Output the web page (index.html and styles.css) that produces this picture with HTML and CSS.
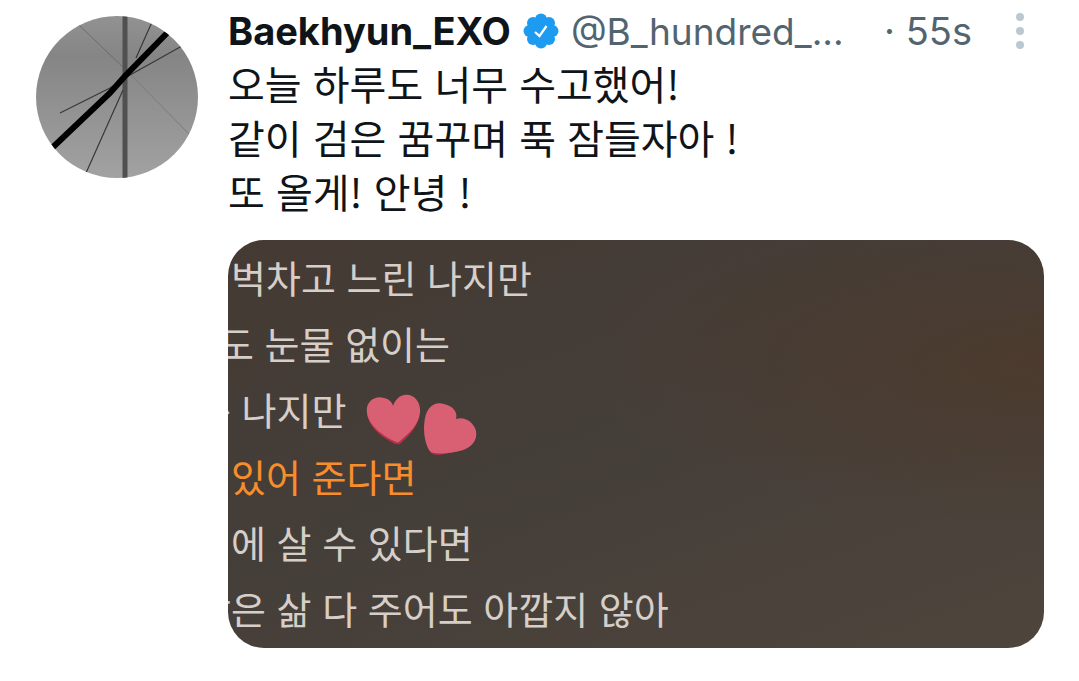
FILE: index.html
```html
<!DOCTYPE html>
<html lang="ko">
<head>
<meta charset="utf-8">
<meta name="viewport" content="width=device-width, initial-scale=1">
<title>Baekhyun_EXO</title>
<link rel="stylesheet" href="styles.css">
</head>
<body>
<article class="tweet">
  <svg class="avatar" viewBox="0 0 162 162" role="img" aria-label="Baekhyun_EXO">
    <defs>
      <linearGradient id="sky" x1="0" y1="0" x2="0" y2="1">
        <stop offset="0" stop-color="#929292"/>
        <stop offset=".25" stop-color="#858585"/>
        <stop offset=".5" stop-color="#8f8f8f"/>
        <stop offset="1" stop-color="#a2a2a2"/>
      </linearGradient>
      <clipPath id="disc"><circle cx="81" cy="81" r="81"/></clipPath>
    </defs>
    <g clip-path="url(#disc)" fill="none">
      <path fill="url(#sky)" d="M0 0h162v162H0z"/>
      <path stroke="#6c6c6c" d="M43 9l48 46"/>
      <path stroke="#7c7c7c" d="M91 55l62 63"/>
      <path stroke="#505050" stroke-width="5" d="M89 0v162"/>
      <path stroke="#383838" stroke-width="1.2" d="M24 97l50-25 20-13 52-29M50 157l37-83M100 42l16-36"/>
      <path stroke="#000" stroke-width="6" d="M15 133l59-56 15-17 45-46"/>
    </g>
  </svg>
  <div class="content">
    <header class="header">
      <a class="name" href="#">Baekhyun_EXO</a>
      <svg class="badge" viewBox="0 0 36 36" role="img" aria-label="Verified">
        <g fill="#1d9bf0">
          <circle cx="18" cy="18" r="14"/>
          <circle cx="18" cy="6.5" r="6"/><circle cx="26" cy="10" r="6"/>
          <circle cx="29.500" cy="18" r="6"/><circle cx="26" cy="26" r="6"/>
          <circle cx="18" cy="29.500" r="6"/><circle cx="10" cy="26" r="6"/>
          <circle cx="6.500" cy="18" r="6"/><circle cx="10" cy="10" r="6"/>
        </g>
        <path d="M12 19l4.500 4 7-10" fill="none" stroke="#fff" stroke-width="2.200"/>
      </svg>
      <a class="handle" href="#">@B_hundred_...</a>
      <span class="time">· 55s</span>
      <button class="more" type="button" aria-label="More">
        <svg class="dots" viewBox="0 0 8 36" fill="#b9c8d1"><circle cx="4" cy="4" r="4"/><circle cx="4" cy="18" r="4"/><circle cx="4" cy="32" r="4"/></svg>
      </button>
    </header>
    <p class="text">오늘 하루도 너무 수고했어!<br>같이 검은 꿈꾸며 푹 잠들자아 !<br>또 올게! 안녕 !</p>
    <div class="media">
      <p class="lyric">벅차고 느린 나지만</p>
      <p class="lyric cut-short">도 눈물 없이는</p>
      <p class="lyric cut-long">는 나지만
        <svg class="hearts" viewBox="0 0 112 62" aria-hidden="true">
          <path fill="#b52f46" d="M27 49C16 43 3 34 1 20L54 15C54 31 44 41 34 50Q31 51 27 49z"/>
          <path fill="#d96073" d="M30 48C17 42 3 32 1 19C-1 8 9 1 18 4C23 5 26 8 27 12C29 6 33 2 38 1C47-1 55 7 54 18C53 31 43 39 34 47Q32 49 30 48z"/>
          <path fill="#b52f46" d="M61 45L64 58Q66 61 73 61L98 56z"/>
          <path fill="#d96073" d="M63 56C58 47 57 34 59 24C61 13 69 7 78 10C87 12 92 18 90 25C98 22 108 28 110 37C112 47 104 54 97 56C87 59 77 60 68 59Q65 59 63 56z"/>
        </svg>
      </p>
      <p class="lyric current">있어 준다면</p>
      <p class="lyric">에 살 수 있다면</p>
      <p class="lyric cut-long">남은 삶 다 주어도 아깝지 않아</p>
    </div>
  </div>
</article>
</body>
</html>
```
FILE: styles.css
```css
* {
  box-sizing: border-box;
}

body {
  margin: 0;
  background: #fff;
  color: #0f1419;
  font-family: Inter, "Noto Sans CJK KR", sans-serif;
  font-size: 38px;
}

p {
  margin: 0;
}

.tweet {
  display: flex;
  align-items: flex-start;
  gap: 30px;
  padding: 0 35px 32px 36px;
}

.avatar {
  flex: none;
  width: 162px;
  height: 162px;
  margin-top: 16px;
}

.content {
  flex: 1;
  min-width: 0;
}

.header {
  display: flex;
  align-items: center;
  height: 56px;
  padding: 6px 20px 0 0;
  color: #536471;
  white-space: nowrap;
}

.name {
  color: #0f1419;
  font-weight: 700;
  text-decoration: none;
}

.badge {
  flex: none;
  width: 36px;
  height: 36px;
  margin: 0 12px;
}

.handle {
  color: inherit;
  font-size: 37px;
  text-decoration: none;
}

.time {
  margin-left: auto;
}

.more {
  display: flex;
  margin-left: 44px;
  padding: 0;
  border: 0;
  background: none;
}

.dots {
  width: 8px;
  height: 36px;
}

.text {
  font-family: "Noto Sans CJK KR", sans-serif;
  font-size: 40px;
  line-height: 54px;
}

.media {
  display: flex;
  flex-direction: column;
  justify-content: space-between;
  aspect-ratio: 2 / 1;
  margin-top: 22px;
  padding: 6px 3px 10px;
  overflow: hidden;
  border-radius: 36px;
  background:
    radial-gradient(ellipse at 100% 30%, #4c3a2d 0%, transparent 40%),
    linear-gradient(160deg, #453a33 0%, #443e39 45%, #4e453c 100%);
  color: #d6cec8;
  font-family: "Noto Sans CJK KR", sans-serif;
}

.lyric {
  display: flex;
  align-items: center;
  height: 60px;
  white-space: nowrap;
}

.cut-short {
  margin-left: -12px;
}

.cut-long {
  margin-left: -35px;
}

.current {
  color: #f78d2b;
}

.hearts {
  width: 112px;
  height: 62px;
  margin: 32px 0 0 20px;
}
```
